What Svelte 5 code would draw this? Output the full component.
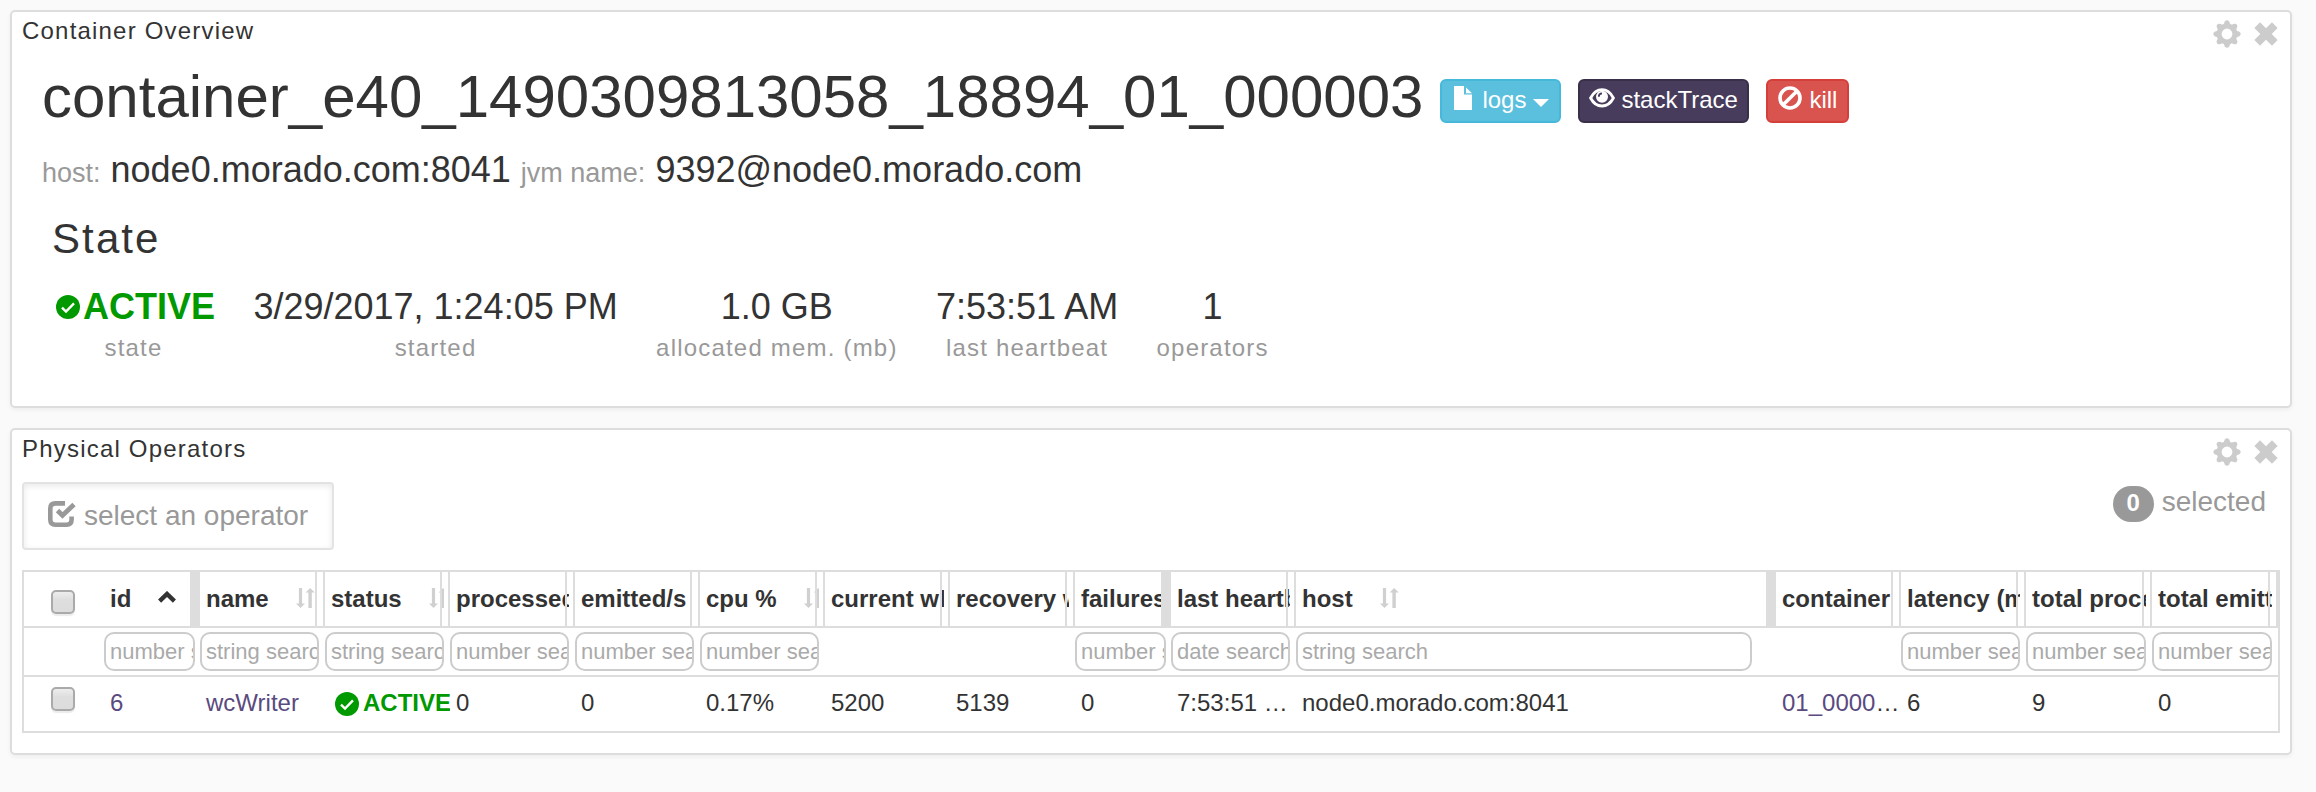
<script>
  const stats = [
    { value: 'ACTIVE', label: 'state', active: true },
    { value: '3/29/2017, 1:24:05 PM', label: 'started' },
    { value: '1.0 GB', label: 'allocated mem. (mb)' },
    { value: '7:53:51 AM', label: 'last heartbeat' },
    { value: '1', label: 'operators' }
  ];

  const columns = [
    { name: 'id', filter: 'number search', value: '6', link: true, sorted: true, solid: true },
    { name: 'name', filter: 'string search', value: 'wcWriter', link: true },
    { name: 'status', filter: 'string search', value: 'ACTIVE', active: true },
    { name: 'processed/s', filter: 'number search', value: '0' },
    { name: 'emitted/s', filter: 'number search', value: '0' },
    { name: 'cpu %', filter: 'number search', value: '0.17%' },
    { name: 'current wID', value: '5200' },
    { name: 'recovery wID', value: '5139' },
    { name: 'failures', filter: 'number search', value: '0', solid: true },
    { name: 'last heartbeat', filter: 'date search', value: '7:53:51 …' },
    { name: 'host', filter: 'string search', value: 'node0.morado.com:8041', solid: true },
    { name: 'container', value: '01_0000', link: true, more: true },
    { name: 'latency (ms)', filter: 'number search', value: '6' },
    { name: 'total processed', filter: 'number search', value: '9' },
    { name: 'total emitted', filter: 'number search', value: '0' }
  ];
</script>

{#snippet okIcon(cls)}
  <svg class={cls} width="24" height="24" viewBox="0 0 24 24">
    <circle cx="12" cy="12" r="12" fill="#090" />
    <path d="M6 12.6l4 4 8-8.2" fill="none" stroke="#fff" stroke-width="2.4" />
  </svg>
{/snippet}

{#snippet panelHead(title)}
  <header class="head">
    <h2>{title}</h2>
    <div class="tools">
      <svg width="28" height="28" viewBox="-14 -14 28 28">
        <circle r="7.9" fill="none" stroke="#ccc" stroke-width="5" />
        {#each [0, 45, 90, 135, 180, 225, 270, 315] as a}
          <path d="M-3.6 -9L-2.2 -12.4Q0 -15 2.2 -12.4L3.6 -9z" fill="#ccc" transform="rotate({a})" />
        {/each}
      </svg>
      <svg width="24" height="24" viewBox="0 0 24 24">
        <path d="M3.2 3.2L20.8 20.8M20.8 3.2L3.2 20.8" stroke="#ccc" stroke-width="8" />
      </svg>
    </div>
  </header>
{/snippet}

<main>
  <section class="panel overview">
    {@render panelHead('Container Overview')}
    <div class="title">
      <h1>container_e40_1490309813058_18894_01_000003</h1>
      <button class="btn info">
        <svg class="file" width="18" height="24" viewBox="0 0 18 24">
          <path d="M0 0H10V8.5H18V24H0zM12 1.5L18 7.3H12z" fill="#fff" />
        </svg>
        logs
        <svg class="caret" width="16" height="8" viewBox="0 0 16 8"><path d="M0 0H16L8 8z" fill="#fff" /></svg>
      </button>
      <button class="btn dark">
        <svg class="eye" width="26" height="20" viewBox="0 0 26 20">
          <path d="M1.6 10C4.2 5 8.2 1.7 13 1.7S21.8 5 24.4 10C21.8 15 17.8 18 13 18S4.2 15 1.6 10z" fill="none" stroke="#fff" stroke-width="2.8" />
          <circle cx="13" cy="8.8" r="6" fill="#fff" />
          <path d="M9.8 8.8a3.4 3.4 0 0 1 3.2-3.5" fill="none" stroke="#483c5c" stroke-width="1.8" />
        </svg>
        stackTrace
      </button>
      <button class="btn danger">
        <svg class="ban" width="24" height="24" viewBox="0 0 24 24">
          <circle cx="12" cy="12" r="10" fill="none" stroke="#fff" stroke-width="3.6" />
          <path d="M5.4 18.6L18.6 5.4" stroke="#fff" stroke-width="3.6" />
        </svg>
        kill
      </button>
    </div>
    <p class="info-line"><small>host:</small> node0.morado.com:8041 <small>jvm name:</small> 9392@node0.morado.com</p>
    <h3>State</h3>
    <div class="stats">
      {#each stats as s}
        <div class="stat">
          <div class="value" class:active={s.active}>{#if s.active}{@render okIcon('ok')}{/if}{s.value}</div>
          <div class="label">{s.label}</div>
        </div>
      {/each}
    </div>
  </section>

  <section class="panel operators">
    {@render panelHead('Physical Operators')}
    <div class="bar">
      <div class="pick">
        <svg width="28" height="27" viewBox="0 0 28 27">
          <path d="M17 2.4H7.5Q2.3 2.4 2.3 7.5V18.5Q2.3 23.7 7.5 23.7H18.5Q23.6 23.7 23.6 18.5V15.5" fill="none" stroke="#999" stroke-width="4.6" />
          <path d="M9.5 9.5L14.5 14.5L26 3.4" fill="none" stroke="#999" stroke-width="4.8" />
        </svg>
        select an operator
      </div>
      <div class="selected"><b>0</b>selected</div>
    </div>
    <div class="table">
      <div class="row thead">
        <div class="cell check"><i></i></div>
        {#each columns as c}
          <div class="cell">
            <div class="clip">
              <span>{c.name}</span>
              {#if c.sorted}
                <svg class="chev" width="18" height="12" viewBox="0 0 18 12"><path d="M1.6 10.2L9 3L16.4 10.2" fill="none" stroke="#333" stroke-width="4.4" /></svg>
              {:else}
                <svg width="19" height="20" viewBox="0 0 19 20">
                  <path d="M2.9 0H6.1V15.4H9L4.5 20L0 15.4H2.9zM12.4 20V4.6H9.6L14.1 0L18.8 4.6H15.8V20z" fill="#d0d0d0" />
                </svg>
              {/if}
            </div>
            <div class="handle" class:solid={c.solid}></div>
          </div>
        {/each}
      </div>
      <div class="row filters">
        <div class="cell"></div>
        {#each columns as c}
          <div class="cell">{#if c.filter}<input type="text" placeholder={c.filter} />{/if}</div>
        {/each}
      </div>
      <div class="row data">
        <div class="cell check"><i></i></div>
        {#each columns as c}
          <div class="cell" class:link={c.link} class:active={c.active}>{#if c.active}{@render okIcon('ok')}{/if}{c.value}{#if c.more}<span class="more">…</span>{/if}</div>
        {/each}
      </div>
    </div>
  </section>
</main>

<style>
  :global(body) { background: #fafafa; }
  * { box-sizing: border-box; }
  main {
    display: flex; flex-direction: column; gap: 20px;
    width: 2316px; height: 792px; padding: 10px 24px 0 10px;
    font-family: "Liberation Sans", Arial, sans-serif; font-size: 24px; color: #333;
    overflow: hidden;
  }
  h1, h2, h3, p { margin: 0; font-weight: 400; }
  svg { display: block; flex: none; }
  .panel {
    background: #fff; border: 2px solid #ddd; border-radius: 5px;
    box-shadow: 0 2px 4px rgba(0, 0, 0, 0.05); padding: 5px 10px 0;
  }
  .overview { height: 398px; }
  .operators { height: 327px; }
  .head { display: flex; justify-content: space-between; height: 28px; }
  h2 { font-size: 24px; line-height: 28px; letter-spacing: 1.2px; }
  .tools { display: flex; gap: 13px; padding: 3px 2px 0 0; }
  .tools svg:last-child { margin-top: 2px; }

  .title { display: flex; align-items: center; height: 66px; margin: 18px 0 0 20px; }
  h1 { font-size: 60px; line-height: 66px; margin: 2px 17px 0 0; white-space: nowrap; }
  .btn {
    display: flex; align-items: flex-start; height: 44px; margin: 10px 17px 0 0; padding: 0;
    border: 2px solid; border-radius: 6px; color: #fff; font: 24px/38px "Liberation Sans", Arial, sans-serif;
  }
  .info { width: 121px; background: #5bc0de; border-color: #46b8da; padding-left: 12px; }
  .dark { width: 171px; background: #483c5c; border-color: #392f49; padding-left: 9px; }
  .danger { width: 83px; background: #d9534f; border-color: #d43f3a; padding-left: 10px; }
  .file { margin: 5px 10px 0 0; }
  .caret { margin: 18px 0 0 7px; }
  .eye { margin: 7px 6px 0 0; }
  .ban { margin: 5px 7px 0 0; }

  .info-line { font-size: 36px; line-height: 40px; height: 40px; margin: 21px 0 0 20px; white-space: nowrap; }
  small { font-size: 27px; line-height: 1; color: #999; }
  h3 { font-size: 42px; line-height: 46px; letter-spacing: 2.1px; margin: 26px 0 0 30px; }
  .stats { display: flex; gap: 38.4px; margin: 25px 0 0 30px; }
  .stat { text-align: center; }
  .value { display: flex; justify-content: center; font-size: 36px; line-height: 40px; height: 40px; white-space: nowrap; }
  .value.active, .data .active { color: #090; font-weight: 700; }
  .value :global(.ok) { margin: 8px 3px 0 4px; }
  .label { margin-top: 7px; line-height: 28px; letter-spacing: 1.2px; color: #999; white-space: nowrap; }

  .bar { display: flex; justify-content: space-between; height: 68px; margin-top: 19px; font-size: 28px; color: #999; }
  .pick {
    display: flex; width: 312px; height: 68px; padding-left: 24px; line-height: 64px;
    border: 2px solid #e3e3e3; border-radius: 4px; box-shadow: inset 0 2px 6px rgba(0, 0, 0, 0.09);
  }
  .pick svg { margin: 17px 8px 0 0; }
  .selected { display: flex; padding: 4px 14px 0 0; line-height: 32px; }
  .selected b {
    width: 41px; height: 36px; margin-right: 8px; border-radius: 20px; background: #999; color: #fff;
    font-size: 24px; line-height: 34px; text-align: center;
  }

  .table { width: 2258px; margin-top: 20px; border: 2px solid #ddd; }
  .row { display: grid; grid-template-columns: 80px 96px repeat(7, 125px) 96px 125px 480px 125px 125px 126px 126px; white-space: nowrap; }
  .cell { position: relative; min-width: 0; overflow: hidden; }
  .thead { height: 56px; border-bottom: 2px solid #ddd; font-weight: 700; line-height: 53px; }
  .clip { display: flex; align-items: flex-start; overflow: hidden; margin: 0 6px; }
  .clip svg { margin: 16px 0 0 27px; }
  .clip .chev { margin-top: 19px; }
  .handle { position: absolute; top: 0; right: 0; width: 10px; height: 54px; border: solid #ddd; border-width: 0 2px; }
  .solid { background: #ddd; }
  .filters { height: 49px; border-bottom: 2px solid #ddd; }
  input {
    display: block; width: 95%; height: 39px; margin: 4px 0 0; padding: 0 0 0 4px; outline: none;
    border: 2px solid #ccc; border-radius: 10px; background: #fff; font: 22px "Liberation Sans", Arial, sans-serif;
  }
  input::placeholder { color: #aaa; opacity: 1; }
  .data { height: 54px; line-height: 52px; }
  .data .cell { padding-left: 6px; }
  .data .link { color: #5a4a80; }
  .more { color: #333; }
  .data .active { display: flex; padding-left: 10px; }
  .data :global(.ok) { margin: 15px 4px 0 0; }
  .row .check { display: flex; align-items: flex-start; padding: 18px 0 0 27px; }
  .data .check { padding-top: 10px; }
  .check i {
    width: 24px; height: 24px; border: 2px solid #aaa; border-radius: 5px;
    background: linear-gradient(#ededed, #dedede 40%, #dcdcdc); box-shadow: 0 2px 1px rgba(0, 0, 0, 0.08);
  }
</style>
